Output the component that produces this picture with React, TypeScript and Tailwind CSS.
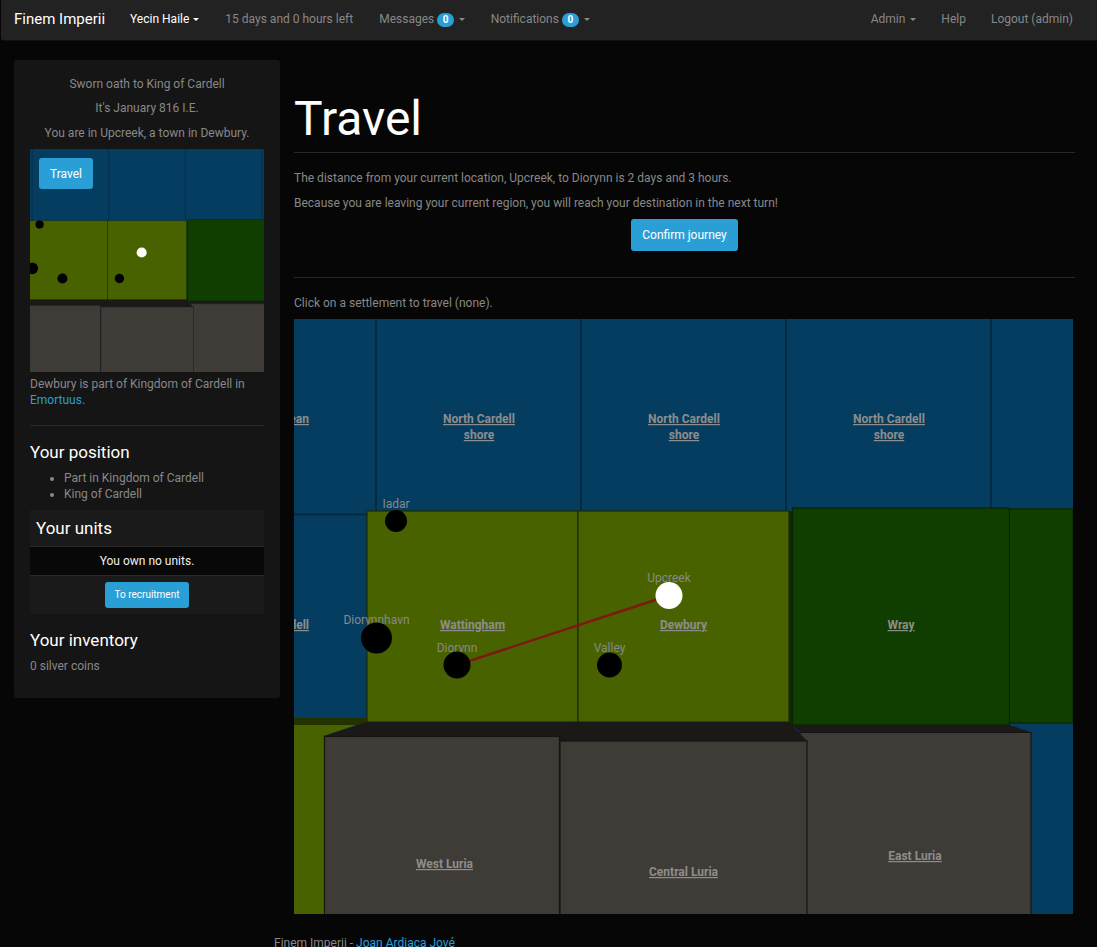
import React from 'react';

const WATER = '#053d60';
const OLIVE = '#496200';
const FOREST = '#103e00';
const ROCK = '#3f3c37';
const ROOF = '#1a1918';
const EDGE = '#04263c';

const settlements = [
  { name: 'Iadar', x: 396, y: 521, r: 11, labelY: 508 },
  { name: 'Diorynnhavn', x: 376.5, y: 638, r: 15.5, labelY: 624 },
  { name: 'Diorynn', x: 457, y: 665, r: 13.5, labelY: 652 },
  { name: 'Valley', x: 609.5, y: 665, r: 12.5, labelY: 652 },
  { name: 'Upcreek', x: 669, y: 595.5, r: 13.5, labelY: 582 },
];

const regionLabels = [
  { lines: ['Ocean'], x: 309, y: 423, anchor: 'end' },
  { lines: ['North Cardell', 'shore'], x: 479, y: 423 },
  { lines: ['North Cardell', 'shore'], x: 684, y: 423 },
  { lines: ['North Cardell', 'shore'], x: 889, y: 423 },
  { lines: ['Cardell'], x: 309, y: 629, anchor: 'end' },
  { lines: ['Wattingham'], x: 472.5, y: 629 },
  { lines: ['Dewbury'], x: 683.5, y: 629 },
  { lines: ['Wray'], x: 901, y: 629 },
  { lines: ['West Luria'], x: 444.5, y: 868 },
  { lines: ['Central Luria'], x: 683.5, y: 876 },
  { lines: ['East Luria'], x: 915, y: 860 },
];

const WorldMap: React.FC<{ viewBox: string; detailed?: boolean; className: string }> = ({ viewBox, detailed, className }) => (
  <svg viewBox={viewBox} className={className} preserveAspectRatio="none">
    <rect x="200" y="300" width="1000" height="700" fill={WATER} />

    {/* sea cells */}
    <g stroke={EDGE} strokeWidth="1.5" fill="none">
      <path d="M376 319V514M581 319V511M786 319V511M991 319V509M200 514.5H367" />
    </g>

    {/* lowlands under the mountains */}
    <rect x="200" y="718" width="170" height="8" fill="#243200" />
    <path d="M200 725H356L324 736V914H200Z" fill={OLIVE} />
    <path d="M1009 509H1073V723H1009Z" fill={FOREST} stroke="#0b2b00" strokeWidth="1.5" />
    <path d="M1073 509H1200V723H1073Z" fill={FOREST} />
    <path d="M789 511H793V725H789Z" fill="#0b2b00" />

    <rect x="367" y="511" width="211" height="211" fill={OLIVE} stroke="#1f2c00" strokeWidth="1.2" />
    <rect x="578" y="511" width="211" height="211" fill={OLIVE} stroke="#1f2c00" strokeWidth="1.2" />
    <rect x="792.5" y="508" width="217" height="217" fill={FOREST} stroke="#0a2300" strokeWidth="1.2" />

    {/* mountains, west and east sit behind the central one */}
    <path d="M324 736L367 722H580L562 742H560V736Z" fill={ROOF} />
    <path d="M792 725H1009L1031 732H800Z" fill={ROOF} />
    <g stroke="#151413" strokeWidth="1.2">
      <rect x="324.5" y="736.5" width="235" height="300" fill={ROCK} />
      <path d="M800 732.5H1031V1030H800Z" fill={ROCK} />
    </g>
    <path d="M560 741L578 722H789L807 741Z" fill={ROOF} />
    <rect x="560" y="741" width="247" height="300" fill={ROCK} stroke="#151413" strokeWidth="1.2" />

    {detailed &&
      regionLabels.map((label, idx) => (
        <text
          key={idx}
          x={label.x}
          y={label.y}
          textAnchor={(label.anchor as 'end' | undefined) || 'middle'}
          className="fill-[#8d8d8d] text-[12px] font-bold underline"
        >
          {label.lines.map((line, i) => (
            <tspan key={i} x={label.x} dy={i === 0 ? 0 : 16}>
              {line}
            </tspan>
          ))}
        </text>
      ))}

    {detailed && <path d="M457 665L669 595.5" stroke="#7b1a14" strokeWidth="2.5" />}

    {detailed &&
      settlements.map((s) => (
        <text key={s.name} x={s.x} y={s.labelY} textAnchor="middle" className="fill-[#888888] text-[12px]">
          {s.name}
        </text>
      ))}

    {settlements.map((s) => (
      <circle key={s.name} cx={s.x} cy={s.y} r={s.r} fill={s.name === 'Upcreek' ? '#fff' : '#000'} />
    ))}
  </svg>
);

const Caret: React.FC<{ className?: string }> = ({ className }) => (
  <span className={`inline-block h-0 w-0 border-x-[3.5px] border-t-[3.5px] border-x-transparent align-middle ${className || 'ml-[5px] border-t-[#888]'}`} />
);

const Badge: React.FC = () => (
  <span className="ml-[3px] inline-flex h-[14px] w-[17px] items-center justify-center rounded-full bg-[#2a9fd6] text-[10px] font-bold text-white">0</span>
);

const Navbar: React.FC = () => (
  <nav className="ml-px flex h-[41px] items-center rounded-bl-[3px] border-b border-[#111] bg-[#222] pb-px text-[12px] text-[#888]">
    <span className="ml-[13px] mr-[13px] text-[15px] text-white">Finem Imperii</span>
    <span className="ml-[12px] text-white">Yecin Haile<Caret className="ml-[4px] border-t-white" /></span>
    <span className="ml-[26px]">15 days and 0 hours left</span>
    <span className="ml-[26px]">Messages<Badge /><Caret /></span>
    <span className="ml-[25.5px]">Notifications<Badge /><Caret /></span>
    <span className="ml-auto">Admin<Caret /></span>
    <span className="ml-[25px]">Help</span>
    <span className="ml-[25px] mr-[24px]">Logout (admin)</span>
  </nav>
);

const Sidebar: React.FC = () => (
  <aside className="h-[638px] w-[266px] shrink-0 rounded-[3px] bg-[#151515] px-[16px] pt-[16px] text-[12px] leading-[16px] text-[#888]">
    <div className="text-center">
      <p className="mb-[8px]">Sworn oath to King of Cardell</p>
      <p className="mb-[9px]">It's January 816 I.E.</p>
      <p className="mb-[8px]">You are in Upcreek, a town in Dewbury.</p>
    </div>
    <div className="relative h-[223px] w-[234px] overflow-hidden">
      <WorldMap viewBox="370.3 319 626 596" className="block h-full w-full" />
      <button className="absolute left-[9px] top-[9px] h-[31px] w-[54px] rounded-[3px] bg-[#2a9fd6] text-[12px] text-white">Travel</button>
    </div>
    <p className="mt-[3.5px]">
      Dewbury is part of Kingdom of Cardell in <a className="text-[#2a9fd6]">Emortuus</a>.
    </p>
    <hr className="mb-[16.5px] mt-[17.5px] border-[#282828]" />
    <h4 className="text-[17px] leading-[19px] text-white">Your position</h4>
    <ul className="mb-[8px] mt-[8.5px] list-disc pl-[34px]">
      <li>Part in Kingdom of Cardell</li>
      <li>King of Cardell</li>
    </ul>
    <div className="bg-[#1a1a1a]">
      <div className="flex h-[37px] items-center border-b border-[#282828] px-[6px] text-[17px] text-white">Your units</div>
      <div className="flex h-[28px] items-center justify-center bg-[#080808] text-[#eeeeee]">You own no units.</div>
      <div className="flex h-[39px] items-center justify-center border-t border-[#282828]">
        <button className="h-[26px] w-[84px] rounded-[3px] bg-[#2a9fd6] text-[10px] text-white">To recruitment</button>
      </div>
    </div>
    <h4 className="mt-[16.5px] text-[17px] leading-[19px] text-white">Your inventory</h4>
    <p className="mt-[8.5px]">0 silver coins</p>
  </aside>
);

export default function App() {
  return (
    <div className="h-screen overflow-hidden bg-[#060606] text-[12px] leading-[17px] text-[#888] [font-family:Roboto,sans-serif]">
      <Navbar />
      <div className="flex gap-[14px] pl-[14px] pt-[19px]">
        <Sidebar />
        <main className="w-[781px]">
          <h1 className="mt-[32px] text-[48px] leading-[53px] text-white">Travel</h1>
          <hr className="mt-[7px] border-[#282828]" />
          <p className="mt-[17px]">The distance from your current location, Upcreek, to Diorynn is 2 days and 3 hours.</p>
          <p className="mt-[8px]">Because you are leaving your current region, you will reach your destination in the next turn!</p>
          <div className="mt-[7px] flex justify-center">
            <button className="h-[32px] w-[107px] rounded-[3px] bg-[#2a9fd6] text-[12px] text-white">Confirm journey</button>
          </div>
          <hr className="mt-[26px] border-[#282828]" />
          <p className="mt-[17px]">Click on a settlement to travel (none).</p>
          <WorldMap viewBox="294 319 779 595" detailed className="mt-[7px] block h-[595px] w-[779px]" />
          <p className="-ml-[20px] mt-[21px]">
            Finem Imperii - <a className="text-[#2a9fd6]">Joan Ardiaca Jové</a>
          </p>
        </main>
      </div>
    </div>
  );
}
